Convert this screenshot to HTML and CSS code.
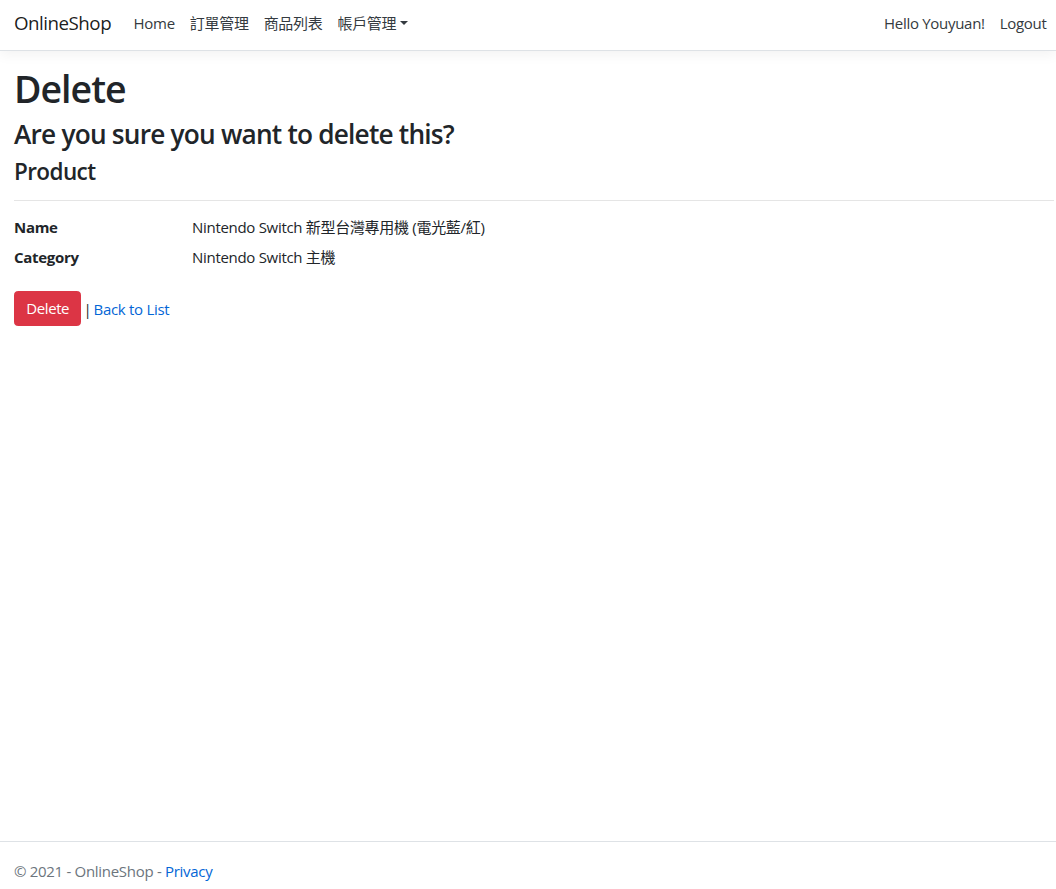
FILE: index.html
```html
<!DOCTYPE html>
<html lang="zh-Hant">
<head>
<meta charset="utf-8">
<title>Delete - OnlineShop</title>
<link rel="stylesheet" href="styles.css">
</head>
<body>
<header class="topbar">
  <nav class="navbar">
    <a class="brand" href="#">OnlineShop</a>
    <ul class="nav nav-main">
      <li><a class="nav-link" href="#">Home</a></li>
      <li><a class="nav-link" href="#">訂單管理</a></li>
      <li><a class="nav-link" href="#">商品列表</a></li>
      <li><a class="nav-link dropdown-toggle" href="#">帳戶管理</a></li>
    </ul>
    <ul class="nav nav-user">
      <li><a class="nav-link" href="#">Hello Youyuan!</a></li>
      <li><a class="nav-link" href="#">Logout</a></li>
    </ul>
  </nav>
</header>
<main class="main">
  <h1 class="h1">Delete</h1>
  <h3 class="h3">Are you sure you want to delete this?</h3>
  <div>
    <h4 class="h4">Product</h4>
    <hr class="rule">
    <dl class="details">
      <dt>Name</dt>
      <dd>Nintendo Switch 新型台灣專用機 (電光藍/紅)</dd>
      <dt>Category</dt>
      <dd>Nintendo Switch 主機</dd>
    </dl>
    <form class="actions">
      <button type="button" class="btn-danger">Delete</button> <span class="sep">|</span> <a class="link" href="#">Back to List</a>
    </form>
  </div>
</main>
<footer class="footer">
  <div class="footer-inner">&copy; 2021 - OnlineShop - <a class="link" href="#">Privacy</a></div>
</footer>
</body>
</html>
```
FILE: styles.css
```css
html {
  font-size: 15px;
}
* {
  box-sizing: border-box;
}
body {
  margin: 0;
  min-height: 100vh;
  display: flex;
  flex-direction: column;
  font-family: "Open Sans", "Noto Sans CJK TC", sans-serif;
  font-size: 15px;
  line-height: 1.5;
  letter-spacing: -0.3px;
  color: #212529;
  background: #fff;
}
a {
  text-decoration: none;
}
.topbar {
  background: #fff;
  border-bottom: 1px solid #dee2e6;
  box-shadow: 0 4px 12px rgba(0, 0, 0, 0.05);
  margin-bottom: 15px;
}
.navbar {
  display: flex;
  align-items: center;
  height: 50px;
  padding: 0 2px 4px 14px;
}
.brand {
  font-size: 18.75px;
  color: rgba(0, 0, 0, 0.9);
  margin-right: 15px;
  line-height: 1.5;
  letter-spacing: -0.5px;
}
.nav {
  list-style: none;
  margin: 0;
  padding: 0;
  display: flex;
}
.nav-main {
  flex: 1;
}
.nav-link {
  display: block;
  padding: 7.5px 7.5px;
  color: #343a40;
}
.dropdown-toggle::after {
  content: "";
  display: inline-block;
  margin-left: 4px;
  vertical-align: 4px;
  border-top: 4.5px solid;
  border-left: 4.5px solid transparent;
  border-right: 4.5px solid transparent;
}
.main {
  flex: 1;
  padding: 0 2px 0 14px;
}
.h1, .h3, .h4 {
  margin: 0 0 7.5px;
  font-weight: 600;
  line-height: 1.2;
}
.h1 {
  font-size: 37.5px;
  letter-spacing: -1px;
}
.h3 {
  font-size: 26.25px;
  letter-spacing: -0.8px;
}
.h4 {
  font-size: 22.5px;
  letter-spacing: -0.6px;
}
.rule {
  margin: 15px 0;
  border: 0;
  border-top: 1px solid rgba(0, 0, 0, 0.1);
}
.details {
  display: grid;
  grid-template-columns: 178px 1fr;
  margin: 0 0 15px;
}
.details dt {
  font-weight: 700;
  margin-bottom: 7.5px;
}
.details dd {
  margin: 0 0 7.5px;
}
.actions {
  margin: 0;
  word-spacing: -1.5px;
}
.btn-danger {
  font-family: inherit;
  font-size: 15px;
  line-height: 1.5;
  letter-spacing: -0.4px;
  word-spacing: 0;
  color: #fff;
  background: #dc3545;
  border: 1px solid #dc3545;
  border-radius: 3.75px;
  padding: 5.625px 11.25px;
  cursor: pointer;
}
.link {
  word-spacing: 0;
}
.sep {
  color: #212529;
}
.link {
  color: #0366d6;
}
.footer {
  border-top: 1px solid #dee2e6;
  height: 48px;
  overflow: hidden;
  line-height: 58px;
  color: #6c757d;
  white-space: nowrap;
}
.footer-inner {
  padding-left: 14px;
}
```
